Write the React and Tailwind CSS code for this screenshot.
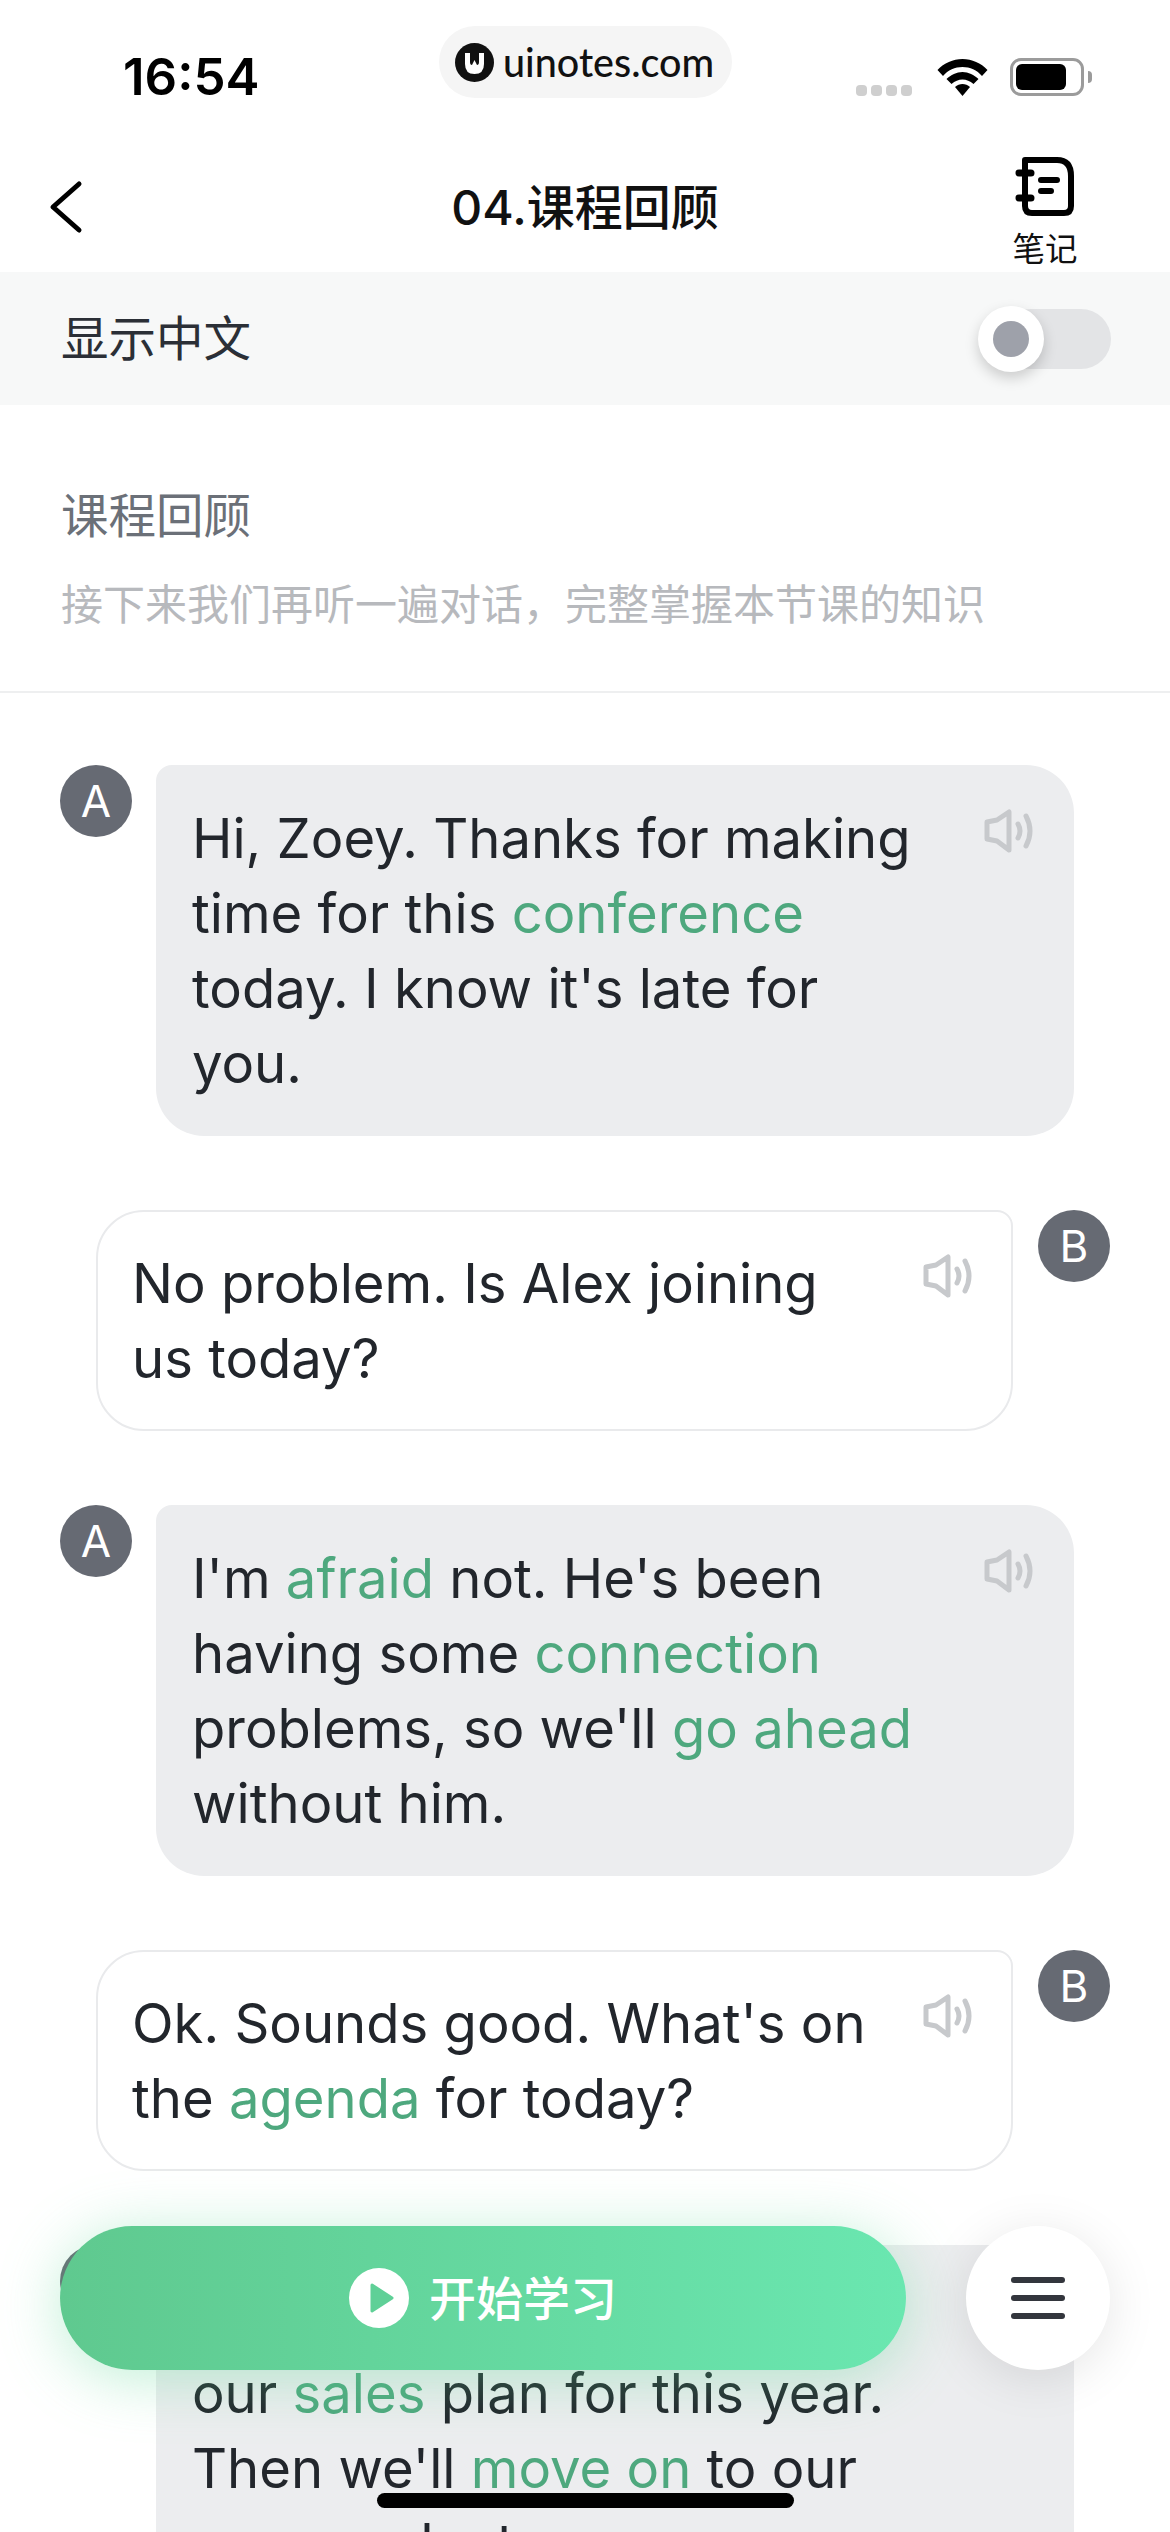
const fontStack = '[font-family:Inter,"Noto_Sans_CJK_SC",sans-serif]';

function G({ children }) {
  return <span className="text-[#4ea87e]">{children}</span>;
}

function Speaker({ className }) {
  return (
    <svg className={`absolute ${className}`} width="50" height="44" viewBox="0 0 50 44" fill="none" stroke="#c7c9cc" strokeWidth="5" strokeLinecap="round" strokeLinejoin="round">
      <path d="M3 13 L13 11 L25 3 L25 41 L13 32 L3 30 Z" />
      <path d="M34 15 Q38 22 34 29" />
      <path d="M42 7 Q50 22 42 37" />
    </svg>
  );
}

function Avatar({ name }) {
  return (
    <div className="w-[72px] h-[72px] shrink-0 rounded-full bg-[#666a73] flex items-center justify-center text-white text-[44px] font-normal">
      {name}
    </div>
  );
}

function RowA({ children }) {
  return (
    <div className="flex gap-[24px]">
      <Avatar name="A" />
      <div className="relative w-[918px] bg-[#ecedef] rounded-[48px] rounded-tl-[16px] pl-[36px] pr-[146px] pt-[36px] pb-[35px]">
        {children}
        <Speaker className="top-[44px] right-[40px]" />
      </div>
    </div>
  );
}

function RowB({ children }) {
  return (
    <div className="flex gap-[25px] ml-[36px]">
      <div className="relative w-[917px] bg-white border-2 border-[#e9eaec] rounded-[48px] rounded-tr-[16px] pl-[34px] pr-[128px] pt-[34px] pb-[33px]">
        {children}
        <Speaker className="top-[42px] right-[38px]" />
      </div>
      <Avatar name="B" />
    </div>
  );
}

function StatusBar() {
  return (
    <div className="relative h-[130px] bg-white">
      <div className="absolute left-[123px] top-[49px] text-[51px] leading-[56px] font-semibold text-black">16:54</div>
      {/* watermark pill */}
      <div className="absolute left-[439px] top-[26px] w-[293px] h-[72px] rounded-full bg-[#f5f5f5] flex items-center pl-[16px] gap-[9px]">
        <svg width="39" height="39" viewBox="0 0 39 39">
          <circle cx="19.5" cy="19.5" r="19.5" fill="#111" />
          <path d="M10 10 H15 V19 Q15 22 17 22 L19.5 17 L22 22 Q24 22 24 19 V10 H29 V21 Q29 31 19.5 31 Q10 31 10 21 Z" fill="#fff" />
        </svg>
        <span className="text-[39.5px] leading-none font-medium text-[#111] [font-family:Lato,sans-serif]">uinotes.com</span>
      </div>
      <div className="absolute left-[856px] top-[85px] flex gap-[4px]">
        <div className="w-[11px] h-[11px] rounded-[4px] bg-[#cfcfcf]" />
        <div className="w-[11px] h-[11px] rounded-[4px] bg-[#cfcfcf]" />
        <div className="w-[11px] h-[11px] rounded-[4px] bg-[#cfcfcf]" />
        <div className="w-[11px] h-[11px] rounded-[4px] bg-[#cfcfcf]" />
      </div>
      <svg className="absolute left-[937px] top-[59px]" width="51" height="37" viewBox="0 0 51 37" fill="#000">
        <path d="M0.5 11 C7 4 16 0 25.5 0 C35 0 44 4 50.5 11 L45 17 C40 11 33 8 25.5 8 C18 8 11 11 6 17 Z" />
        <path d="M9.5 20 C14 16 19.5 13 25.5 13 C31.5 13 37 16 41.5 20 L36.5 25 C33 22 29.5 20.5 25.5 20.5 C21.5 20.5 18 22 14.5 25 Z" />
        <path d="M18 28 C20 26 23 25 25.5 25 C28 25 31 26 33 28 L25.5 37 Z" />
      </svg>
      <div className="absolute left-[1010px] top-[58px] w-[74px] h-[38px] rounded-[11px] border-[3px] border-[#9b9b9b] p-[3px]">
        <div className="w-[50px] h-full rounded-[6px] bg-black" />
      </div>
      <div className="absolute left-[1088px] top-[71px] w-[4px] h-[12px] rounded-r-full bg-[#9b9b9b]" />
    </div>
  );
}

function NavBar() {
  return (
    <div className="relative h-[142px] bg-white flex items-center justify-center pt-[14px]">
      <svg className="absolute left-[48px] top-[50px]" width="36" height="54" viewBox="0 0 36 54" fill="none" stroke="#000" strokeWidth="5" strokeLinecap="round" strokeLinejoin="round">
        <path d="M31 4 L5 27 L31 50" />
      </svg>
      <div className="text-[48px] leading-none font-medium text-[#111]">04.课程回顾</div>
      <div className="absolute left-[1007px] top-[26px] w-[76px] flex flex-col items-center">
        <svg width="60" height="60" viewBox="0 0 60 60" fill="none" stroke="#000" strokeLinecap="round" strokeLinejoin="round">
          <path strokeWidth="6" d="M10 4 H42 Q56 4 56 20 V50 Q56 57 49 57 H17 Q10 57 10 50 Z" />
          <path strokeWidth="7" d="M4 17 H16 M4 42 H16" />
          <path strokeWidth="6" d="M26 24 H42 M26 35 H36" />
        </svg>
        <div className="text-[32.5px] leading-none text-[#111] mt-[18px]">笔记</div>
      </div>
    </div>
  );
}

export default function App() {
  return (
    <div className={`relative h-[2532px] w-[1170px] overflow-hidden bg-white ${fontStack}`}>
      <StatusBar />
      <NavBar />

      <div className="h-[133px] bg-[#f7f8f8] flex items-center justify-between pl-[61px] pr-[59px]">
        <div className="text-[47.5px] leading-none text-[#2b2f36]">显示中文</div>
        <div className="relative w-[110px] h-[60px] rounded-full bg-[#e3e4e6]">
          <div className="absolute left-[-23px] top-[-3px] w-[66px] h-[66px] rounded-full bg-white shadow-[0_6px_14px_rgba(0,0,0,0.18)] flex items-center justify-center">
            <div className="w-[36px] h-[36px] rounded-full bg-[#9ea1aa]" />
          </div>
        </div>
      </div>

      <div className="h-[288px] border-b-2 border-[#eeeff0] pl-[61px] pt-[81px]">
        <div className="text-[47.5px] leading-[60px] text-[#6b7078]">课程回顾</div>
        <div className="text-[42px] leading-[60px] text-[#b7b9bd] mt-[29px]">接下来我们再听一遍对话，完整掌握本节课的知识</div>
      </div>

      <div className="flex flex-col gap-[74px] px-[60px] pt-[72px] text-[54.4px] leading-[75px] text-[#22262c]">
        <RowA>
          Hi, Zoey. Thanks for making time for this <G>conference</G> today. I know it's late for you.
        </RowA>
        <RowB>No problem. Is Alex joining us today?</RowB>
        <RowA>
          I'm <G>afraid</G> not. He's been having some <G>connection</G> problems, so we'll <G>go ahead</G> without him.
        </RowA>
        <RowB>
          Ok. Sounds good. What's on the <G>agenda</G> for today?
        </RowB>
        <RowA>
          First, I'd like to talk about our <G>sales</G> plan for this year. Then we'll <G>move on</G> to our new products.
        </RowA>
      </div>

      {/* floating actions */}
      <div className="absolute left-[60px] top-[2226px] w-[846px] h-[144px] rounded-full bg-gradient-to-r from-[#5fc98f] to-[#6ae7b0] shadow-[0_8px_60px_rgba(96,214,150,0.4)] flex items-center justify-center gap-[20px]">
        <svg width="60" height="60" viewBox="0 0 60 60">
          <circle cx="30" cy="30" r="30" fill="#fff" />
          <path d="M23 17 L43 30 L23 43 Z" fill="#5fd097" stroke="#5fd097" strokeWidth="3" strokeLinejoin="round" />
        </svg>
        <div className="text-[47px] leading-none font-medium text-white">开始学习</div>
      </div>
      <div className="absolute left-[966px] top-[2226px] w-[144px] h-[144px] rounded-full bg-white shadow-[0_8px_50px_rgba(0,0,0,0.1)] flex flex-col items-center justify-center gap-[12px]">
        <div className="w-[54px] h-[6px] rounded-full bg-[#33363d]" />
        <div className="w-[54px] h-[6px] rounded-full bg-[#33363d]" />
        <div className="w-[54px] h-[6px] rounded-full bg-[#33363d]" />
      </div>
      <div className="absolute left-[377px] top-[2493px] w-[417px] h-[15px] rounded-full bg-black" />
    </div>
  );
}
